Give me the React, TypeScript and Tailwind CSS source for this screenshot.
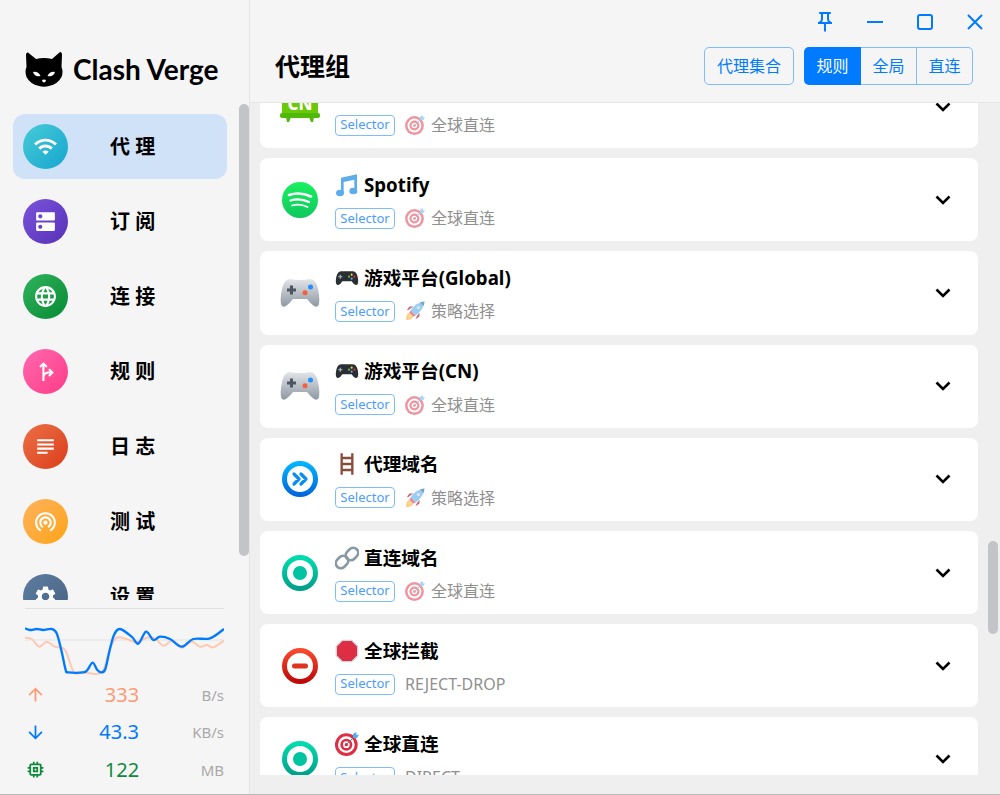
import { MdWifi, MdDns, MdLanguage, MdForkRight, MdSubject, MdWifiTethering, MdSettings, MdOutlinePushPin, MdArrowUpward, MdArrowDownward, MdMemory } from 'react-icons/md'

const FONT = '"Noto Sans", "Noto Sans CJK SC", sans-serif'

const navs = [
  { label: '代 理', Icon: MdWifi, bg: 'from-[#44cbd6] to-[#14a5cf]', active: true },
  { label: '订 阅', Icon: MdDns, bg: 'from-[#7a55dd] to-[#5730b5]' },
  { label: '连 接', Icon: MdLanguage, bg: 'from-[#2eb35c] to-[#028a34]' },
  { label: '规 则', Icon: MdForkRight, bg: 'from-[#ff66ae] to-[#ff3a88]' },
  { label: '日 志', Icon: MdSubject, bg: 'from-[#ec6f45] to-[#da3c18]' },
  { label: '测 试', Icon: MdWifiTethering, bg: 'from-[#ffb258] to-[#ffa400]' },
  { label: '设 置', Icon: MdSettings, bg: 'from-[#5d7da0] to-[#486282]' },
]

function smooth(pts: number[][]) {
  let d = `M${pts[0][0]} ${pts[0][1]}`
  for (let i = 0; i < pts.length - 1; i++) {
    const p0 = pts[Math.max(i - 1, 0)]
    const p1 = pts[i]
    const p2 = pts[i + 1]
    const p3 = pts[Math.min(i + 2, pts.length - 1)]
    d += ` C${p1[0] + (p2[0] - p0[0]) / 6} ${p1[1] + (p2[1] - p0[1]) / 6} ${p2[0] - (p3[0] - p1[0]) / 6} ${p2[1] - (p3[1] - p1[1]) / 6} ${p2[0]} ${p2[1]}`
  }
  return d
}

const blueLine = [[75,100],[90,105],[110,102],[130,105],[155,102],[170,115],[185,170],[197,225],[205,232],[250,232],[262,225],[278,203],[292,225],[305,232],[316,222],[328,170],[342,120],[360,102],[395,125],[415,146],[438,110],[460,135],[480,125],[510,132],[545,155],[580,132],[630,130],[672,102]]
const orangeLine = [[75,128],[95,132],[118,155],[140,140],[165,155],[195,165],[222,232],[250,232],[305,232],[330,160],[350,128],[380,132],[410,142],[440,128],[465,130],[490,152],[515,138],[545,158],[575,140],[600,155],[620,150],[640,157],[672,137]]

function TrafficGraph() {
  return (
    <svg width="199" height="60" viewBox="75 75 597 180" className="block">
      <line x1="75" x2="672" y1="135" y2="135" stroke="#e3e3e3" strokeWidth="3" />
      <path d={smooth(orangeLine)} fill="none" stroke="#ffc8b2" strokeWidth="6" />
      <path d={smooth(blueLine)} fill="none" stroke="#007aff" strokeWidth="7" />
    </svg>
  )
}

function CatLogo() {
  return (
    <svg width="38" height="36" viewBox="0 0 38 36">
      <path d="M3 1.5 L11 8 Q19 6 27 8 L35 1 Q37 1 37 4 L36.5 16 Q38.5 21 36.5 26 Q33 33 24 35 Q19 36.5 14 35 Q5 33 1.5 26 Q-0.5 20 1.5 16 L1 4 Q1 1 3 1.5 Z" fill="#000" />
      <path d="M8 21 Q13 20 15.5 25 Q10 26.5 8 21 Z" fill="#fff" />
      <path d="M30 21 Q25 20 22.5 25 Q28 26.5 30 21 Z" fill="#fff" />
      <path d="M17 29 Q19 28 21 29 Q20.5 31.5 19 31.5 Q17.5 31.5 17 29 Z" fill="#fff" />
    </svg>
  )
}

function TargetEmoji({ size = 20, dim = false }: { size?: number; dim?: boolean }) {
  return (
    <svg width={size} height={size} viewBox="0 0 36 36" className={dim ? 'opacity-50' : ''}>
      <circle cx="17" cy="19" r="17" fill="#dd2e44" />
      <circle cx="17" cy="19" r="12.5" fill="#fff" />
      <circle cx="17" cy="19" r="9" fill="#dd2e44" />
      <circle cx="17" cy="19" r="5" fill="#fff" />
      <circle cx="17" cy="19" r="2.5" fill="#dd2e44" />
      <path d="M17 19 L30 6" stroke="#66757f" strokeWidth="1.5" />
      <path d="M27 9 L27 3 L32 0 L32 4 L36 4 L33 9 Z" fill="#55acee" />
    </svg>
  )
}

function RocketEmoji({ dim = true }: { dim?: boolean }) {
  return (
    <svg width="20" height="20" viewBox="0 0 36 36" className={dim ? 'opacity-60' : ''}>
      <path d="M2 34 Q1 24 8 21 L15 28 Q12 35 2 34 Z" fill="#ffac33" />
      <path d="M6 30 Q6 25 10 24 L12 26 Q11 30 6 30 Z" fill="#ffcc4d" />
      <path d="M8 15 L3 17 L8 10 L15 10 Z" fill="#a0041e" />
      <path d="M21 28 L19 33 L26 28 L26 21 Z" fill="#a0041e" />
      <path d="M10 17 Q19 3 35 1 Q33 17 19 26 Z" fill="#55acee" />
      <path d="M27 2.5 Q33 1 35 1 Q35 3 33.5 9 Z" fill="#269" />
      <circle cx="24" cy="12" r="3" fill="#ccd6dd" />
      <path d="M10 17 L19 26 L15 28 L8 21 Z" fill="#dd2e44" />
    </svg>
  )
}

function MusicEmoji() {
  return (
    <svg width="24" height="24" viewBox="0 0 36 36">
      <path d="M9 7 L33 2 V27 H29 V10 L13 13.5 V30 H9 Z" fill="#5dadec" />
      <ellipse cx="7.5" cy="30" rx="6" ry="5" fill="#5dadec" />
      <ellipse cx="27.5" cy="27" rx="6" ry="5" fill="#5dadec" />
    </svg>
  )
}

function GamepadEmoji() {
  return (
    <svg width="24" height="24" viewBox="0 0 36 36">
      <path d="M10 8 H26 Q32 8 34 16 Q36 26 33 28 Q29 30 25 23 H11 Q7 30 3 28 Q0 26 2 16 Q4 8 10 8 Z" fill="#292f33" />
      <path d="M8 13 V19 M5 16 H11" stroke="#99aab5" strokeWidth="2" />
      <circle cx="25" cy="13" r="1.6" fill="#ffcc4d" />
      <circle cx="29" cy="16" r="1.6" fill="#dd2e44" />
      <circle cx="21" cy="16" r="1.6" fill="#77b255" />
      <circle cx="25" cy="19" r="1.6" fill="#55acee" />
    </svg>
  )
}

function LadderEmoji() {
  return (
    <svg width="24" height="24" viewBox="0 0 36 36">
      <path d="M10 2 V34 M26 2 V34 M10 9 H26 M10 18 H26 M10 27 H26" fill="none" stroke="#8a4b38" strokeWidth="3.5" />
    </svg>
  )
}

function LinkEmoji() {
  return (
    <svg width="24" height="24" viewBox="0 0 36 36" fill="none" stroke="#8899a6" strokeWidth="4">
      <rect x="18" y="2" width="15" height="20" rx="7.5" transform="rotate(45 25.5 12)" />
      <rect x="3" y="14" width="15" height="20" rx="7.5" transform="rotate(45 10.5 24)" />
    </svg>
  )
}

function StopEmoji() {
  return (
    <svg width="24" height="24" viewBox="0 0 36 36">
      <path d="M11 2 H25 L34 11 V25 L25 34 H11 L2 25 V11 Z" fill="#dd2e44" stroke="#ccd6dd" strokeWidth="2" />
    </svg>
  )
}

function GamepadIcon() {
  return (
    <svg width="40" height="40" viewBox="0 0 40 40">
      <defs>
        <linearGradient id="pad" x1="0" y1="0" x2="0" y2="1">
          <stop offset="0" stopColor="#e2e5e9" />
          <stop offset="1" stopColor="#8f98a3" />
        </linearGradient>
      </defs>
      <path d="M10 6 Q20 8 30 6 Q36 6 38 16 Q40 26 39 31 Q38 35 34 33 Q30 30 27 26 H13 Q10 30 6 33 Q2 35 1 31 Q0 26 2 16 Q4 6 10 6 Z" fill="url(#pad)" />
      <path d="M11.5 12.5 V21.5 M7 17 H16" stroke="#4c5560" strokeWidth="3" />
      <circle cx="30.5" cy="14" r="2.500" fill="#1e90ff" />
      <circle cx="25" cy="19.700" r="2.500" fill="#f2603c" />
    </svg>
  )
}

function SpotifyIcon() {
  return (
    <svg width="36" height="36" viewBox="0 0 36 36">
      <defs>
        <linearGradient id="sp" x1="0" y1="0" x2="0" y2="1">
          <stop offset="0" stopColor="#19f05f" />
          <stop offset="1" stopColor="#0fc85f" />
        </linearGradient>
      </defs>
      <circle cx="18" cy="18" r="18" fill="url(#sp)" />
      <path d="M7 13 Q18 9.500 29 14.500" stroke="#fff" strokeWidth="2.600" fill="none" strokeLinecap="round" />
      <path d="M8.500 18.500 Q18 15.500 27 20" stroke="#fff" strokeWidth="2.200" fill="none" strokeLinecap="round" />
      <path d="M10 23.500 Q18 21 25.500 25" stroke="#fff" strokeWidth="1.800" fill="none" strokeLinecap="round" />
    </svg>
  )
}

function ForwardIcon() {
  return (
    <svg width="36" height="36" viewBox="0 0 36 36">
      <defs>
        <linearGradient id="fw" x1="0" y1="0" x2="0" y2="1">
          <stop offset="0" stopColor="#00b4ff" />
          <stop offset="1" stopColor="#0068dd" />
        </linearGradient>
      </defs>
      <circle cx="18" cy="18" r="15.500" fill="none" stroke="url(#fw)" strokeWidth="5" />
      <path d="M12 13 L17 18 L12 23 M19 13 L24 18 L19 23" fill="none" stroke="#0a8cf0" strokeWidth="3.200" strokeLinecap="round" strokeLinejoin="round" />
    </svg>
  )
}

function RingIcon() {
  return (
    <svg width="36" height="36" viewBox="0 0 36 36">
      <defs>
        <linearGradient id="rg" x1="0" y1="0" x2="0" y2="1">
          <stop offset="0" stopColor="#00dcae" />
          <stop offset="1" stopColor="#00a08a" />
        </linearGradient>
      </defs>
      <circle cx="18" cy="18" r="15.500" fill="none" stroke="url(#rg)" strokeWidth="5" />
      <circle cx="18" cy="18" r="7" fill="#00c4a0" />
    </svg>
  )
}

function BlockIcon() {
  return (
    <svg width="36" height="36" viewBox="0 0 36 36">
      <defs>
        <linearGradient id="bk" x1="0" y1="0" x2="0" y2="1">
          <stop offset="0" stopColor="#f8492c" />
          <stop offset="1" stopColor="#bd0a0a" />
        </linearGradient>
      </defs>
      <circle cx="18" cy="18" r="15.500" fill="none" stroke="url(#bk)" strokeWidth="5" />
      <rect x="10" y="15.500" width="16" height="5" rx="2.500" fill="#e0321e" />
    </svg>
  )
}

function TvIcon() {
  return (
    <svg width="40" height="40" viewBox="0 0 40 40">
      <rect x="2" y="0" width="36" height="30" rx="2" fill="#6bc90a" />
      <path d="M6 30 H11 L9 35 H7 Z M29 30 H34 L33 35 H31 Z" fill="#4fb80a" />
      <rect x="0" y="26" width="40" height="5" rx="2" fill="#4fb80a" />
      <text x="20" y="23" textAnchor="middle" fontSize="17" fontWeight="800" fill="#fff" fontFamily={FONT}>CN</text>
    </svg>
  )
}

type Group = { icon: React.ReactNode; emoji: React.ReactNode; title: string; sub?: React.ReactNode; now: string }

const target = <TargetEmoji dim />
const rocket = <RocketEmoji />

const groups: Group[] = [
  { icon: <TvIcon />, emoji: null, title: '', sub: target, now: '全球直连' },
  { icon: <SpotifyIcon />, emoji: <MusicEmoji />, title: 'Spotify', sub: target, now: '全球直连' },
  { icon: <GamepadIcon />, emoji: <GamepadEmoji />, title: '游戏平台(Global)', sub: rocket, now: '策略选择' },
  { icon: <GamepadIcon />, emoji: <GamepadEmoji />, title: '游戏平台(CN)', sub: target, now: '全球直连' },
  { icon: <ForwardIcon />, emoji: <LadderEmoji />, title: '代理域名', sub: rocket, now: '策略选择' },
  { icon: <RingIcon />, emoji: <LinkEmoji />, title: '直连域名', sub: target, now: '全球直连' },
  { icon: <BlockIcon />, emoji: <StopEmoji />, title: '全球拦截', now: 'REJECT-DROP' },
  { icon: <RingIcon />, emoji: <TargetEmoji size={24} />, title: '全球直连', now: 'DIRECT' },
]

function GroupCard({ g }: { g: Group }) {
  return (
    <div className="mb-[10px] flex h-[83.2px] shrink-0 items-center rounded-lg bg-white pl-5 pr-[27px]">
      <div className="flex w-[40px] shrink-0 justify-center">{g.icon}</div>
      <div className="ml-[15px] min-w-0 flex-1 pt-[1px]">
        <div className="flex h-[26px] items-center gap-[5px] text-[18.700px] leading-[26px] font-bold text-black">
          {g.emoji}
          <span>{g.title}</span>
        </div>
        <div className="mt-[10px] flex items-center">
          <span className="flex h-[21px] w-[60px] items-center justify-center rounded-[4px] border border-[#7fbcff] text-[13px] text-[#4a9cff]">Selector</span>
          <span className="ml-[10px] flex items-center gap-[6px] text-base leading-[20px] text-[#8f8f8f]">
            {g.sub}
            {g.now}
          </span>
        </div>
      </div>
      <svg width="16" height="10" viewBox="0 0 16 10" fill="none" stroke="#000" strokeWidth="2.600"><path d="M1.500 1.500 L8 8 L14.500 1.500" /></svg>
    </div>
  )
}

export default function App() {
  return (
    <div className="flex h-[795px] w-[1000px] overflow-hidden border-b border-[#b9b9b9] bg-[#f5f5f5]" style={{ fontFamily: FONT }}>
      {/* sidebar */}
      <aside className="relative flex w-[250px] shrink-0 flex-col border-r border-[#e4e4e4]">
        <div className="flex h-[104px] shrink-0 items-end gap-[10px] pb-[17px] pl-[25px]">
          <CatLogo />
          <span className="text-[28px] leading-[36px] font-bold text-black" style={{ fontFamily: 'Lato, sans-serif' }}>Clash Verge</span>
        </div>
        <nav className="flex h-[496px] shrink-0 flex-col gap-[10px] overflow-hidden pl-[13px] pt-[10px]">
          {navs.map(n => (
            <div key={n.label} className={`flex h-[65px] w-[214px] shrink-0 items-center rounded-xl pl-[10px] ${n.active ? 'bg-[#cfe2f8]' : ''}`}>
              <div className={`flex h-[45px] w-[45px] items-center justify-center rounded-full bg-linear-to-br ${n.bg}`}>
                <n.Icon className="h-[25px] w-[25px] text-white" />
              </div>
              <span className="ml-[42px] text-[20px] font-bold text-black">{n.label}</span>
            </div>
          ))}
        </nav>
        <div className="absolute right-0 top-[104px] h-[452px] w-[10px] rounded-md bg-[#c3c4c7]" />
        <div className="mx-[25px] mt-[8px] border-t border-[#e0e0e0] pt-[11px]">
          <TrafficGraph />
          <div className="-mt-[4px] flex flex-col">
            {[
              { Icon: MdArrowUpward, val: '333', unit: 'B/s', color: 'text-[#fc9b76]' },
              { Icon: MdArrowDownward, val: '43.3', unit: 'KB/s', color: 'text-[#007aff]' },
              { Icon: MdMemory, val: '122', unit: 'MB', color: 'text-[#10893e]' },
            ].map(r => (
              <div key={r.unit} className="flex h-[37.500px] items-center">
                <r.Icon className={`h-[21px] w-[21px] shrink-0 ${r.color}`} />
                <span className={`w-[152px] text-center text-xl ${r.color}`}>{r.val}</span>
                <span className="flex-1 text-right text-[15px] text-[#a9a9a9]">{r.unit}</span>
              </div>
            ))}
          </div>
        </div>
      </aside>

      {/* main */}
      <main className="relative flex min-w-0 flex-1 flex-col">
        <header className="h-[103px] shrink-0 border-b border-[#e6e6e6] pl-[25px] pr-[27px]">
          <div className="-mr-[14px] flex h-[44px] items-center justify-end gap-[26px] text-[#007aff]">
            <MdOutlinePushPin className="h-[24px] w-[24px]" />
            <svg width="24" height="24" viewBox="0 0 24 24" fill="none" stroke="currentColor" strokeWidth="2"><path d="M4 12 H20" /></svg>
            <svg width="24" height="24" viewBox="0 0 24 24" fill="none" stroke="currentColor" strokeWidth="2"><rect x="5" y="5" width="14" height="14" rx="2" /></svg>
            <svg width="24" height="24" viewBox="0 0 24 24" fill="none" stroke="currentColor" strokeWidth="2"><path d="M5 5 L19 19 M19 5 L5 19" /></svg>
          </div>
          <div className="mt-[3px] flex items-center">
            <h1 className="text-[25px] leading-[38px] font-bold text-black">代理组</h1>
            <button className="ml-auto h-[38px] w-[90px] rounded-[5px] border border-[#7fbcff] text-base text-[#007aff]">代理集合</button>
            <div className="ml-[10px] flex h-[38px] w-[169px] text-base text-[#007aff]">
              <span className="flex w-[57px] items-center justify-center rounded-l-[5px] bg-[#007aff] text-white">规则</span>
              <span className="flex w-[56px] items-center justify-center border-y border-r border-[#7fbcff]">全局</span>
              <span className="flex flex-1 items-center justify-center rounded-r-[5px] border-y border-r border-[#7fbcff]">直连</span>
            </div>
          </div>
        </header>
        <div className="h-[672px] shrink-0 overflow-hidden bg-[#efefef] pl-[10px] pr-[22px]">
          <div className="-mt-[38px]">
            {groups.map((g, i) => <GroupCard key={i} g={g} />)}
          </div>
        </div>
        <div className="flex-1 bg-[#efefef]" />
        <div className="absolute right-[2px] top-[541px] h-[93px] w-[10px] rounded-md bg-[#c3c4c7]" />
      </main>
    </div>
  )
}
